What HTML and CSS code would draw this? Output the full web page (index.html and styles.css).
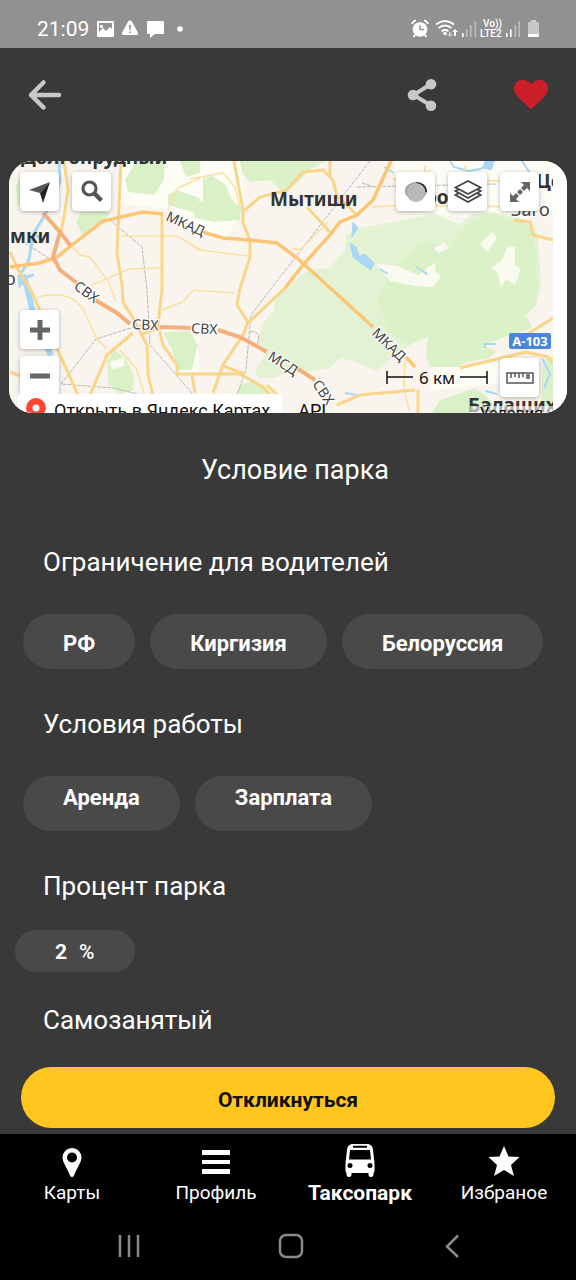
FILE: index.html
```html
<!DOCTYPE html>
<html lang="ru">
<head>
<meta charset="utf-8">
<meta name="viewport" content="width=device-width, initial-scale=1">
<title>Условие парка</title>
<link rel="stylesheet" href="styles.css">
</head>
<body>
<div class="status">
  <span class="clock">21:09</span>
  <svg width="92" height="24" viewBox="95 17 92 24" fill="#fff" aria-hidden="true">
    <path fill-rule="evenodd" d="M98 21h15q1 0 1 1v14q0 1-1 1H98q-1 0-1-1V22q0-1 1-1zm1 2v9l4-4 3 3 4-4 2 2v-6zm1 2h3v3h-3z"/>
    <path fill-rule="evenodd" d="M130 20.500q1.300 0 2 1.300l6 11q.6 2.200-1.600 2.200h-12.800q-2.200 0-1.600-2.200l6-11q.7-1.300 2-1.300zm-.9 4.500l.3 5h1.300l.3-5zm.2 6.500v1.600h1.500v-1.600z"/>
    <path d="M148 21h15q1 0 1 1v11q0 1-1 1h-8l-5 4v-4h-2q-1 0-1-1V22q0-1 1-1z"/>
    <circle cx="180" cy="29" r="2.800"/>
  </svg>
  <svg class="status-right" width="134" height="24" viewBox="408 17 134 24" fill="#fff" aria-hidden="true">
    <circle cx="420" cy="29.500" r="7.300"/>
    <path d="M420 25v4.500h4" fill="none" stroke="#919191" stroke-width="1.400"/>
    <path d="M412 24q1-3 4-3.600M424 20.400q3 .6 4 3.600M413.500 37l2-2.500M426.500 37l-2-2.500" fill="none" stroke="#fff" stroke-width="1.800"/>
    <path d="M436 24.500q9-7 18 0M438.500 28q6.500-5 13 0M441.500 31.300q3.500-2.500 7 0" fill="none" stroke="#fff" stroke-width="1.900"/>
    <circle cx="445" cy="33.500" r="1.700"/>
    <path d="M455 29l3 3h-2v4h-2v-4h-2z"/><path d="M450 37l-3-3h2v-2h2v2h2z" opacity=".5"/>
    <path d="M462 33h1.600v4H462zM506 33h1.600v4H506zM510 29.500h1.600V37H510z"/>
    <path opacity=".4" d="M466 29.500h1.600V37H466zM470 25h1.600v12H470zM474.500 21h1.600v16h-1.600zM514.500 25h1.600v12h-1.600zM518.500 21h1.600v16h-1.600z"/>
    <text class="lte" x="483" y="27">Vo))</text>
    <text class="lte" x="480" y="37">LTE2</text>
    <path opacity=".5" d="M528 22h3v-2h5v2h3v12h-11z"/><path d="M528 34h11v2q0 1-1 1h-9q-1 0-1-1z"/>
  </svg>
</div>

<header class="header">
  <button class="icon-btn" aria-label="Назад"><svg width="36" height="34" viewBox="0 0 36 34" fill="none" stroke="#c8c8c8" stroke-width="4.500" stroke-linecap="round" stroke-linejoin="round"><path d="M17.500 4.500L5 17l12.500 12.500M5 17h28"/></svg></button>
  <button class="icon-btn share" aria-label="Поделиться"><svg width="30" height="34" viewBox="0 0 30 34" fill="#c8c8c8" stroke="#c8c8c8"><path d="M24 6L6.500 17 24 27.500" fill="none" stroke-width="4"/><g stroke="none"><circle cx="24" cy="6.300" r="5.300"/><circle cx="6" cy="17" r="5.300"/><circle cx="24" cy="27.700" r="5.300"/></g></svg></button>
  <button class="icon-btn" aria-label="В избранном"><svg width="36" height="34" viewBox="0 0 36 34"><path fill="#cd1f2a" d="M18 31.500L4 18C0 13 0 8 3 4.500c4-4 10-3.500 15 1.500 5-5 11-5.500 15-1.500 3 3.500 3 8.500-1 13.500z"/></svg></button>
</header>

<main class="main">
  <section class="map" aria-label="Карта">
    <svg class="map-canvas" viewBox="9 161 558 252" preserveAspectRatio="xMidYMid slice">
      <rect x="9" y="161" width="558" height="252" fill="#f9f5ee"/>
      <path fill="#fdfdf6" d="M120 161h120l5 40-18 38-40-14-20-16-47-5zM395 161h158v50l-50 12-60-8-50-8zM430 367l70-4v20l-70 8zM165 330l14 42h20l-2-40z"/>
      <g fill="#daf1c8">
        <path d="M136 161h29l-1 19-10 15-26-3-3-12zM76 222l5-10h29l-6 10-12 6-10 7zM168 195l8-5 24 8-4 15-11-3-17-5zM180 161h20v12l-14 4zM16 185l8-10v26l-7 6zM203 178l10-2 13 9 6 15 9 8-1 12-25 2-20-4-3-12 11-6zM240 161h85l-15 9-15 15-13 6-12-11-20 2-8-10z"/>
        <path d="M163 332l27-1 8 14-4 15-2 10h-14l-6-20zM107 360l8-10 10 8 9 17-1 15-13 4-12-9zM240 385l12-4 12 5 7 8h-35zM432 413l8-13 15-5 20-7 10 7 15 18zM543 360l10-5v55h-12z"/>
      </g>
      <path fill="#e4f2d4" d="M262 325l12-15 1-15 15-10 18-15 22-2 15-18 1-15 14-7 45-8 30-6 25 11 10-10 20-3 30 6 15 7 3 15 3 45-5 20-10 10 6 13-22 7-27 10 13 7-7 6-23 4-6 5h-30l-4-12 2-18-18 8-14 10-20 16-26-11-10-2-10 10-20 4h-20l-15 6h-17l-3-8 10-15-7-15z"/>
      <path fill="#dbf2c8" d="M377 300l15-32 36-28 15 12 28-32 22-7 24 8 16 6 5 58-2 20-10 10 6 13-22 7-27 10 13 7-7 6-23 4-6 5h-30l-4-12 2-18-20 8-20-14z"/>
      <path fill="#fafaf0" d="M376 264l22 2 20 9 18-13-1 10 6 4-8 11-17-1-26-5zM480 244l12-12 5 6-10 14zM502 260l6-14 7 1v18l6 4-6 16-9-6-5 9-3-15-7-5zM434 248l10-5 5 5-11 5zM110 362l14-5v9l-12 4z"/>
      <g fill="#a9d7f6" stroke="#a9d7f6">
        <path d="M59 161l1 20-7 20-13 22-6 10-6 30-9 13 1 9 6-8 8-2M36 235l7 6" fill="none" stroke-width="3"/>
        <path d="M23 275l4 12 6 26 10 26 8 16" fill="none" stroke-width="6"/>
        <path d="M353 222l5 6-6 9zM350 243l6 4 3 9 6-2 9 9-3 7-10-7-8-6zM416 267l11 6v2zM485 161h9l-3 9-8-2z"/>
        <path d="M450 161l4 6 14 4 12-2 14-8M485 348v-4h11M542 358l8 16-6 14M522 161l10 15M384 167l10 6M380 269l8 5M345 393l12 2M485 391l12 3" fill="none" stroke-width="2"/>
      </g>
      <g fill="none" stroke="#b7b7bd" stroke-width="1" stroke-dasharray="4 1">
        <path d="M370 161L270 290l-19 25-5 55-9 25M110 220l32 27 5 43 3 55 42 48M25 243l28 18M150 322l-54 17-35 45 52 4 25 6M357 187l140-3M250 332q12-3 7 14M362 183l12 4"/>
      </g>
      <g fill="none" stroke="#fbe09d" stroke-width="1.500">
        <path d="M70 245l10 10 10 2 18 24 8 20M122 236h55l24 14M92 285l37-16 33-1M162 310l20-8 12-12 40 3M190 179l33-6 12 14 5 20M190 244l10 6 48 6M168 210l10-22 22-10M38 297q30-8 45 12l14 30 10 10M292 248l8 2 28-28M372 207l30-2 128 2M425 165v42M465 165v40M460 180l80 2M405 357l-1 33 5 20M120 350l16 18 8 25M392 178l18 12 20-20"/>
      </g>
      <g fill="none" stroke="#f9d58a" stroke-width="3">
        <path d="M64 161l4 29-4 27-3 15M10 252l10 21 12 19 11 26 17 37 18 40M133 333l-26 22-17 40M121 161l-4 92 5 32 1 17 10 16 14 27 1 30 5 20M162 214v76l-4 35 5 20 14 20v9h63l23 13 9 10M192 375l3 18M10 372l10 4"/>
        <path d="M234 161l9 49v13l7 17v17l-10 31-3 17 11 17-5 13-20 30-10 28M245 210l15-13 27-7 16-18 20-2 10 10 4 16 20 19M330 161v15M307 207l23 25M285 288l-37 35M160 327l-20 8"/>
        <path d="M514 220l16 2 3 13 20 5M460 368l66-16M526 335l27-17M526 352l22 5 5 6M337 405l23-10 55-5M418 390v23M223 366l22 8M267 385l10 10"/>
      </g>
      <path fill="none" stroke="#fbc674" stroke-width="3.500" d="M10 267l30-4 17-6 15-12 31-24 40-9 20 2M203 232l20 6 27 2 27 3 20 15 30 27 46 42M406 357l9 10M391 161l-18 39-16 15-17 7-10 13-27 30-18 23"/>
      <path fill="none" stroke="#f4b07a" stroke-width="4" d="M43 213l17 19 10 13M60 232l-7 25 7 13 17 13M95 300l22 13 13 11M160 327l33 1M218 330l22 7 27 15M295 367l20 13"/>
      <g class="city">
        <text x="21" y="164">Долгопрудный</text>
        <text x="270" y="206">Мытищи</text>
        <text x="10" y="243">мки</text>
        <text x="413" y="204">оро</text>
        <text x="536" y="188">Цё</text>
        <text x="468" y="412">Балаших</text>
      </g>
      <g class="road">
        <text class="town" x="5" y="285">о</text>
        <text class="town" x="511" y="216">Заго</text>
        <text x="165" y="220" transform="rotate(24 165 220)">МКАД</text>
        <text x="73" y="288" transform="rotate(37 73 288)">СВХ</text>
        <text x="132" y="329" transform="rotate(3 132 329)">СВХ</text>
        <text x="191" y="333" transform="rotate(3 191 333)">СВХ</text>
        <text x="267" y="359" transform="rotate(32 267 359)">МСД</text>
        <text x="312" y="384" transform="rotate(56 312 384)">СВХ</text>
        <text x="371" y="334" transform="rotate(44 371 334)">МКАД</text>
      </g>
      <rect x="553" y="161" width="14" height="252" fill="#fff"/>
      <rect x="509" y="333" width="42" height="16" rx="2" fill="#4a86dc"/>
      <text class="shield" x="530" y="346" text-anchor="middle">A-103</text>
      <path d="M387 371v13M387 377h26M460 377h27M487 371v13" stroke="#111" stroke-width="1.500" fill="none"/>
      <text class="scale" x="437" y="384" text-anchor="middle">6 км</text>
    </svg>
    <div class="map-tools">
      <button class="tool" aria-label="Моё местоположение"><svg width="24" height="24" viewBox="0 0 24 24"><path fill="#555" d="M1 10L22 2 12 13z"/><path fill="#222" d="M22 2l-7 21-3-10z"/></svg></button>
      <button class="tool" aria-label="Поиск"><svg width="24" height="24" viewBox="0 0 24 24" fill="none" stroke="#555"><circle cx="9.500" cy="8.500" r="6.500" stroke-width="3.200"/><path d="M14 13l7.500 7.500" stroke-width="4.500"/></svg></button>
      <button class="tool push" aria-label="Пробки"><svg width="24" height="24" viewBox="0 0 24 24"><ellipse cx="12" cy="11" rx="11" ry="9" fill="#999"/><path d="M12 2q10 0 11 10l-5 1z" fill="#222"/><circle cx="12" cy="12.500" r="9.500" fill="#b9b9b9"/></svg></button>
      <button class="tool" aria-label="Слои"><svg width="28" height="24" viewBox="0 0 28 24" fill="#fff" stroke="#444" stroke-width="1.700"><path d="M1.500 15L14 8l12.500 7L14 22z"/><path d="M1.500 11L14 4l12.500 7L14 18z"/><path d="M1.500 7.500L14 1l12.500 6.500L14 14z"/></svg></button>
      <button class="tool" aria-label="На весь экран"><svg width="24" height="24" viewBox="0 0 24 24" fill="#666"><path d="M13 2h9v9l-3-3-3 3-3-3 3-3zM2 13l3 3 3-3 3 3-3 3 3 3H2zM12 9l3 3-3 3-3-3z"/></svg></button>
    </div>
    <div class="zoom">
      <button class="tool" aria-label="Приблизить"><svg width="20" height="20" viewBox="0 0 20 20"><path d="M10 0v20M0 10h20" stroke="#666" stroke-width="5"/></svg></button>
      <button class="tool" aria-label="Отдалить"><svg width="20" height="20" viewBox="0 0 20 20"><path d="M0 10h20" stroke="#666" stroke-width="5"/></svg></button>
    </div>
    <button class="tool ruler" aria-label="Линейка"><svg width="28" height="12" viewBox="0 0 28 12" fill="none" stroke="#555" stroke-width="1.500"><path d="M1 1h26v10H1zM5 1v5M9 1v4M13 1v5M17 1v4M21 3v3h2V3z"/></svg></button>
    <div class="map-links">
      <a class="open" href="#map"><svg width="20" height="24" viewBox="0 0 20 24"><path fill="#f43" d="M10 0a10 10 0 0 1 10 10c0 6-8 8-9 14H9C8 18 0 16 0 10A10 10 0 0 1 10 0z"/><circle cx="10" cy="10" r="3.500" fill="#fff"/></svg>Открыть в Яндекс Картах</a>
      <a class="api" href="#api">API</a>
      <a class="terms" href="#terms">Условия</a>
    </div>
  </section>

  <h1 class="title">Условие парка</h1>

  <h2 class="subtitle first">Ограничение для водителей</h2>
  <div class="chips">
    <span class="chip">РФ</span><span class="chip">Киргизия</span><span class="chip">Белоруссия</span>
  </div>
  <h2 class="subtitle">Условия работы</h2>
  <div class="chips">
    <span class="chip raised">Аренда</span><span class="chip raised">Зарплата</span>
  </div>
  <h2 class="subtitle">Процент парка</h2>
  <div class="chips percent">
    <span class="chip small">2<span class="unit">%</span></span>
  </div>
  <h2 class="subtitle last">Самозанятый</h2>
</main>

<div class="action"><button class="respond">Откликнуться</button></div>

<nav class="tabs">
  <a class="tab" href="#maps"><svg width="36" height="36" viewBox="0 0 36 36" fill="#fff"><path fill-rule="evenodd" d="M18 4a9.500 9.500 0 0 1 9.500 9.500c0 5-5 11-7.500 18q-2 3-4 0c-2.500-7-7.500-13-7.500-18A9.500 9.500 0 0 1 18 4zm0 4.500a5 5 0 1 0 0 10 5 5 0 0 0 0-10z"/></svg>Карты</a>
  <a class="tab" href="#profile"><svg width="36" height="36" viewBox="0 0 36 36" fill="#fff"><path d="M4 6h28v5H4zM4 16h28v4H4zM4 25h28v5H4z"/></svg>Профиль</a>
  <a class="tab active" href="#park" aria-current="page"><svg width="36" height="36" viewBox="0 0 36 36" fill="#fff"><path fill-rule="evenodd" d="M10 0q8-2 16 0 5 1 5 6l1.500 13v8q0 1-1 1.500V31q0 2-2.500 2t-2.500-2v-2H9.500v2q0 2-2.500 2t-2.500-2v-2.500q-1-.5-1-1.500v-8L5 6q0-5 5-6zm1 1.800v2h14v-2zM8 6L7 15.500h22L28 6zm0 13a2.500 2.500 0 1 0 0 5 2.500 2.500 0 0 0 0-5zm20 0a2.500 2.500 0 1 0 0 5 2.500 2.500 0 0 0 0-5z"/></svg>Таксопарк</a>
  <a class="tab" href="#favorites"><svg width="36" height="36" viewBox="0 0 36 36" fill="#fff"><path d="M18 2l4.500 10.500L33.500 13l-8.500 8 3 11-10-6-10 6 3-11-8.500-8 11-.500z"/></svg>Избраное</a>
</nav>
<div class="system">
  <button class="sys" aria-label="Недавние"><svg width="28" height="28" viewBox="0 0 28 28" stroke="#8a8a8a" stroke-width="2.500"><path d="M5 3v22M14 3v22M23 3v22"/></svg></button>
  <button class="sys" aria-label="Домой"><svg width="28" height="28" viewBox="0 0 28 28" fill="none" stroke="#8a8a8a" stroke-width="2.500"><rect x="3" y="3" width="22" height="22" rx="6"/></svg></button>
  <button class="sys" aria-label="Назад"><svg width="28" height="28" viewBox="0 0 28 28" fill="none" stroke="#8a8a8a" stroke-width="2.500"><path d="M19 3.500L8 14.500l11 10.500"/></svg></button>
</div>
</body>
</html>
```
FILE: styles.css
```css
* { box-sizing: border-box; }

body {
  margin: 0;
  min-height: 100vh;
  display: flex;
  flex-direction: column;
  background: #393939;
  color: #fff;
  font-family: Roboto, "Noto Sans", sans-serif;
}

button {
  border: 0;
  padding: 0;
  background: none;
  font-family: inherit;
  cursor: pointer;
}

a { color: inherit; text-decoration: none; }
svg { display: block; flex: none; }

.status {
  display: flex;
  align-items: center;
  gap: 6px;
  height: 48px;
  padding: 10px 34px 0 37px;
  background: #919191;
}
.clock { font-size: 21px; line-height: 24px; }
.status-right { margin-left: auto; }
.lte { font: 500 10px Roboto, sans-serif; }

.header {
  display: flex;
  align-items: center;
  height: 93px;
  padding: 0 27px 0 26px;
}
.icon-btn { display: flex; }
.share { margin-left: auto; margin-right: 76px; }

.main { flex: 1; }

.map {
  position: relative;
  height: 252px;
  margin: 20px 9px 0;
  border-radius: 24px;
  overflow: hidden;
  background: #fff;
}
.map-canvas { width: 100%; height: 100%; }
.city { font: 700 19px "Noto Sans", sans-serif; fill: #333; }
.road {
  font: 14px "Noto Sans", sans-serif;
  fill: #444;
  stroke: #fff;
  stroke-width: 2px;
  paint-order: stroke;
}
.town { font-size: 18px; }
.shield { font: 700 13px "Noto Sans", sans-serif; fill: #fff; }
.scale { font: 17px "Noto Sans", sans-serif; fill: #111; }

.tool {
  display: flex;
  align-items: center;
  justify-content: center;
  width: 39px;
  height: 39px;
  border-radius: 4px;
  background: #fff;
  box-shadow: 0 1px 4px rgba(0, 0, 0, 0.3);
}
.map-tools {
  position: absolute;
  top: 11px;
  left: 11px;
  right: 28px;
  display: flex;
  gap: 13px;
}
.push { margin-left: auto; }
.zoom {
  position: absolute;
  top: 149px;
  left: 11px;
  display: flex;
  flex-direction: column;
  gap: 7px;
}
.ruler { position: absolute; right: 28px; bottom: 16px; }
.map-links {
  position: absolute;
  left: 9px;
  right: 14px;
  bottom: -9px;
  display: flex;
  height: 28px;
  font-size: 18px;
  line-height: 34px;
  color: #111;
}
.open {
  display: flex;
  gap: 8px;
  padding: 0 12px 0 8px;
  background: #fff;
}
.open svg { margin-top: 4px; }
.api { margin-left: 16px; }
.terms {
  margin: 12px 0 0 auto;
  padding: 0 10px;
  background: rgba(255, 255, 255, 0.6);
  font-size: 16px;
  line-height: 16px;
}

.title {
  margin: 41px 0 0;
  padding-left: 14px;
  font-size: 27px;
  font-weight: 400;
  line-height: 32px;
  text-align: center;
}
.subtitle {
  margin: 39px 43px 36px;
  font-size: 26px;
  font-weight: 400;
  line-height: 32px;
}
.first { margin-top: 60px; }
.last { margin-top: 32px; margin-bottom: 30px; }

.chips {
  display: flex;
  flex-wrap: wrap;
  gap: 15px;
  padding: 0 23px;
}
.percent { margin-top: -8px; padding: 0 15px; }
.chip {
  padding: 18px 40px 13px;
  border-radius: 28px;
  background: #494949;
  font-size: 22px;
  font-weight: 700;
  line-height: 24px;
}
.raised { padding-top: 10px; padding-bottom: 21px; }
.small { padding-top: 10px; padding-bottom: 8px; font-size: 21px; }
.unit { margin-left: 12px; font-weight: 500; }

.action { padding: 0 21px 6px; }
.respond {
  width: 100%;
  height: 61px;
  padding-top: 4px;
  border-radius: 31px;
  background: #ffc620;
  color: #111;
  font-size: 21px;
  font-weight: 700;
}

.tabs {
  display: grid;
  grid-template-columns: repeat(4, 1fr);
  padding-top: 10px;
  background: #000;
}
.tab {
  display: flex;
  flex-direction: column;
  align-items: center;
  font-size: 19px;
  line-height: 26px;
}
.active { font-size: 21px; font-weight: 700; }

.system {
  display: flex;
  justify-content: space-between;
  align-items: center;
  height: 74px;
  padding: 6px 109px 0 115px;
  background: #000;
}
.sys { display: flex; }
```
